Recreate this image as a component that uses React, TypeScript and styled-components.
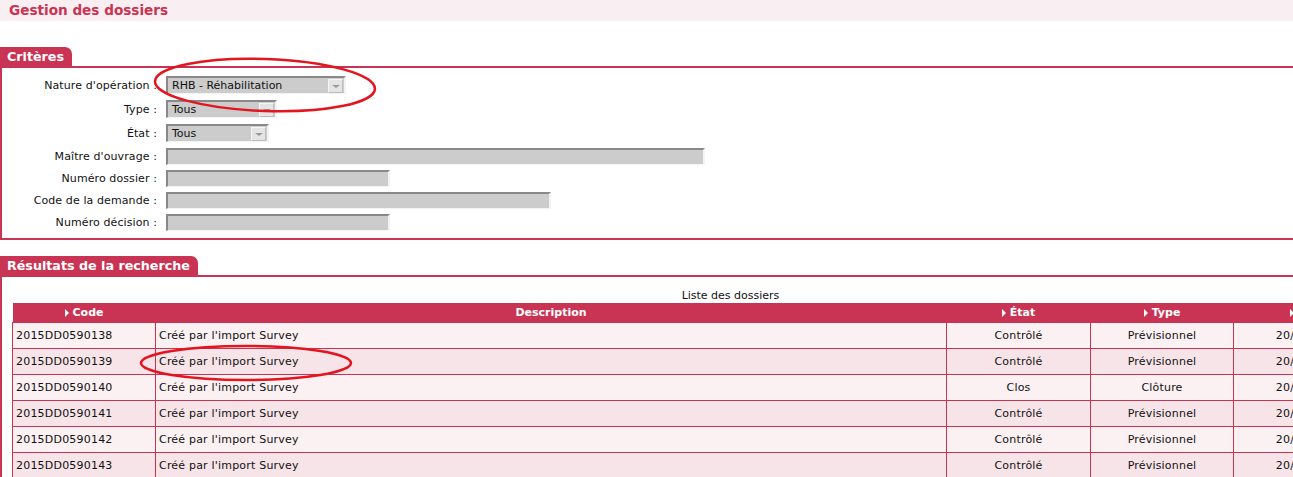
import React from 'react';
import styled, { createGlobalStyle } from 'styled-components';

const crimson = '#c93354';

const GlobalStyle = createGlobalStyle`
  html, body {
    margin: 0;
    padding: 0;
    overflow: hidden;
    background: #fff;
  }
  body {
    font-family: "DejaVu Sans", Verdana, sans-serif;
    font-size: 11px;
    color: #111;
  }
`;

const Page = styled.div`
  position: relative;
  width: 1293px;
  height: 477px;
`;

const PageTitle = styled.h1`
  margin: 0;
  height: 21px;
  line-height: 21px;
  padding-left: 9px;
  background: #f9eef1;
  color: ${crimson};
  font-size: 13.6px;
  font-weight: bold;
`;

const Section = styled.section<{ $gap: number }>`
  margin-top: ${p => p.$gap}px;
`;

const Tab = styled.div`
  display: inline-block;
  height: 19px;
  line-height: 19px;
  padding: 0 8px 0 7px;
  background: ${crimson};
  color: #fff;
  font-size: 12.7px;
  font-weight: bold;
  border-top-right-radius: 7px;
  vertical-align: bottom;
`;

const Panel = styled.div<{ $padTop: number; $padBottom: number }>`
  border: 2px solid ${crimson};
  border-right: none;
  padding: ${p => p.$padTop}px 0 ${p => p.$padBottom}px 10px;
  overflow: hidden;
`;

const FormPanel = styled(Panel)`
  padding-left: 0;
`;

const Row = styled.div<{ $h: number }>`
  display: flex;
  align-items: center;
  height: ${p => p.$h}px;
`;

const Label = styled.label`
  width: 155px;
  text-align: right;
  padding-right: 9px;
  white-space: nowrap;
  letter-spacing: 0.1px;
`;

const Field = styled.div<{ $w: number }>`
  box-sizing: border-box;
  width: ${p => p.$w}px;
  height: 17px;
  background: #cccccc;
  border-top: 2px solid #898989;
  border-left: 2px solid #898989;
  border-right: 2px solid #f3f3f3;
  border-bottom: 1px solid #f3f3f3;
`;

const Select = styled(Field)`
  position: relative;
  height: 18px;
  line-height: 15px;
  padding-left: 4px;
  color: #111;
`;

const SelectArrow = styled.span`
  position: absolute;
  top: 1px;
  right: 1px;
  width: 13px;
  height: 12px;
  background: #e4e4e4;
  border: 1px solid #bdbdbd;
  border-top-color: #f6f6f6;
  border-left-color: #f6f6f6;
  &::after {
    content: '';
    position: absolute;
    left: 3px;
    top: 5px;
    border-left: 4px solid transparent;
    border-right: 4px solid transparent;
    border-top: 3px solid #9a9a9a;
  }
`;

const Table = styled.table`
  border-collapse: collapse;
  table-layout: fixed;
  width: 1436px;
  font-size: 11px;
`;

const Caption = styled.caption`
  height: 14px;
  line-height: 14px;
  text-align: center;
  color: #111;
`;

const Th = styled.th<{ $sort?: boolean }>`
  height: 19px;
  padding: 0;
  background: ${crimson};
  color: #fff;
  font-weight: bold;
  text-align: center;
  white-space: nowrap;
  &::before {
    content: '';
    display: ${p => (p.$sort ? 'inline-block' : 'none')};
    margin-right: 4px;
    border-top: 4px solid transparent;
    border-bottom: 4px solid transparent;
    border-left: 4px solid #fff;
    vertical-align: -1px;
  }
`;

const Tr = styled.tr<{ $odd: boolean }>`
  background: ${p => (p.$odd ? '#f7e4e8' : '#fbf0f2')};
`;

const Td = styled.td<{ $align?: 'left' | 'center' }>`
  height: 25px;
  padding: 0 3px;
  border: 1px solid ${crimson};
  text-align: ${p => p.$align ?? 'left'};
  white-space: nowrap;
  overflow: hidden;
  letter-spacing: 0.2px;
`;

const Annotation = styled.svg`
  position: absolute;
  left: 0;
  top: 0;
  pointer-events: none;
`;

const rows = [
  { code: '2015DD0590138', etat: 'Contrôlé', type: 'Prévisionnel' },
  { code: '2015DD0590139', etat: 'Contrôlé', type: 'Prévisionnel' },
  { code: '2015DD0590140', etat: 'Clos', type: 'Clôture' },
  { code: '2015DD0590141', etat: 'Contrôlé', type: 'Prévisionnel' },
  { code: '2015DD0590142', etat: 'Contrôlé', type: 'Prévisionnel' },
  { code: '2015DD0590143', etat: 'Contrôlé', type: 'Prévisionnel' },
];

const App = () => (
  <Page>
    <GlobalStyle />
    <PageTitle>Gestion des dossiers</PageTitle>

    <Section $gap={26}>
      <Tab>Critères</Tab>
      <FormPanel $padTop={5} $padBottom={5}>
        <Row $h={24}>
          <Label>Nature d'opération :</Label>
          <Select $w={180}>RHB - Réhabilitation<SelectArrow /></Select>
        </Row>
        <Row $h={24}>
          <Label>Type :</Label>
          <Select $w={111}>Tous<SelectArrow /></Select>
        </Row>
        <Row $h={24}>
          <Label>État :</Label>
          <Select $w={103}>Tous<SelectArrow /></Select>
        </Row>
        <Row $h={22}>
          <Label>Maître d'ouvrage :</Label>
          <Field $w={539} />
        </Row>
        <Row $h={22}>
          <Label>Numéro dossier :</Label>
          <Field $w={224} />
        </Row>
        <Row $h={22}>
          <Label>Code de la demande :</Label>
          <Field $w={385} />
        </Row>
        <Row $h={22}>
          <Label>Numéro décision :</Label>
          <Field $w={224} />
        </Row>
      </FormPanel>
    </Section>

    <Section $gap={16}>
      <Tab>Résultats de la recherche</Tab>
      <Panel $padTop={12} $padBottom={0}>
        <Table>
          <Caption>Liste des dossiers</Caption>
          <colgroup>
            <col style={{ width: 143 }} />
            <col style={{ width: 791 }} />
            <col style={{ width: 144 }} />
            <col style={{ width: 143 }} />
            <col style={{ width: 150 }} />
            <col style={{ width: 65 }} />
          </colgroup>
          <thead>
            <tr>
              <Th $sort>Code</Th>
              <Th>Description</Th>
              <Th $sort>État</Th>
              <Th $sort>Type</Th>
              <Th $sort>Date</Th>
              <Th />
            </tr>
          </thead>
          <tbody>
            {rows.map((r, i) => (
              <Tr key={r.code} $odd={i % 2 === 1}>
                <Td>{r.code}</Td>
                <Td>Créé par l'import Survey</Td>
                <Td $align="center">{r.etat}</Td>
                <Td $align="center">{r.type}</Td>
                <Td $align="center">20/05/2015</Td>
                <Td />
              </Tr>
            ))}
          </tbody>
        </Table>
      </Panel>
    </Section>

    <Annotation width={1293} height={477}>
      <ellipse cx={265} cy={85} rx={110} ry={26} transform="rotate(2 265 85)" fill="none" stroke="#e3151f" strokeWidth={2.5} />
      <ellipse cx={246} cy={363} rx={105} ry={17} fill="none" stroke="#e3151f" strokeWidth={2.5} />
    </Annotation>
  </Page>
);

export default App;
